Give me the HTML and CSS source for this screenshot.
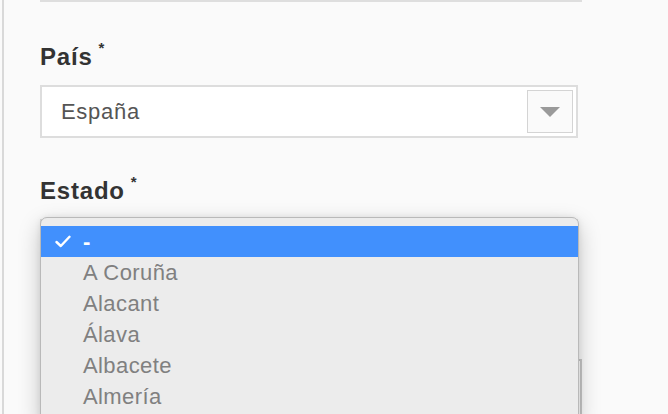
FILE: index.html
```html
<!DOCTYPE html>
<html lang="es">
<head>
<meta charset="utf-8">
<title>Formulario</title>
<link rel="stylesheet" href="styles.css">
</head>
<body>
<div class="page">
  <div class="top-input"></div>

  <div class="field">
    <label class="label">País<span class="req">*</span></label>
    <div class="select">
      <span class="select-value">España</span>
      <span class="select-btn"><span class="tri"></span></span>
    </div>
  </div>

  <div class="field field-estado">
    <label class="label">Estado<span class="req">*</span></label>
    <div class="select-wrap">
      <div class="select select-under"></div>
      <div class="next-box"></div>
      <ul class="menu">
        <li class="opt selected">
          <svg class="check" width="16" height="13" viewBox="0 0 16 13"><path d="M1.5 7 L5.8 11 L14.5 1.8" fill="none" stroke="#fff" stroke-width="2.4" stroke-linecap="round" stroke-linejoin="round"/></svg>
          <span class="opt-text">-</span>
        </li>
        <li class="opt"><span class="opt-text">A Coruña</span></li>
        <li class="opt"><span class="opt-text">Alacant</span></li>
        <li class="opt"><span class="opt-text">Álava</span></li>
        <li class="opt"><span class="opt-text">Albacete</span></li>
        <li class="opt"><span class="opt-text">Almería</span></li>
      </ul>
    </div>
  </div>
</div>
</body>
</html>
```

FILE: styles.css
```css
html, body {
  margin: 0;
  padding: 0;
  background: #fafafa;
  overflow: hidden;
  height: 414px;
}

.page {
  margin-left: 2px;
  border-left: 2px solid #d9d9d9;
  padding-left: 36px;
  height: 470px;
  font-family: "Liberation Sans", Arial, sans-serif;
}

.top-input {
  box-sizing: border-box;
  width: 542px;
  height: 40px;
  margin-top: -38px;
  border: 2px solid #dedede;
  background: #fff;
}

.field {
  display: flex;
  flex-direction: column;
}

.label {
  display: block;
  font-weight: bold;
  font-size: 24px;
  line-height: 28px;
  color: #333;
  margin-top: 41px;
  letter-spacing: 0.8px;
}

.req {
  font-size: 15px;
  line-height: 0;
  vertical-align: 12px;
  margin-left: 6px;
}

.select {
  box-sizing: border-box;
  width: 538px;
  height: 53px;
  margin-top: 14px;
  border: 2px solid #dddddd;
  background: #fff;
  display: flex;
  align-items: center;
  justify-content: space-between;
}

.select-value {
  padding-left: 19px;
  font-size: 22px;
  letter-spacing: 0.7px;
  color: #555;
}

.select-btn {
  box-sizing: border-box;
  width: 46px;
  height: 43px;
  margin-right: 3px;
  border: 1px solid #d4d4d4;
  background: #fafafa;
  display: flex;
  align-items: center;
  justify-content: center;
}

.tri {
  width: 0;
  height: 0;
  border-left: 10px solid transparent;
  border-right: 10px solid transparent;
  border-top: 10px solid #9a9a9a;
}

.field-estado .label {
  margin-top: 39px;
}

.select-wrap {
  position: relative;
  margin-top: 12px;
}

.select-under {
  margin-top: 2px;
}

.next-box {
  box-sizing: border-box;
  width: 542px;
  height: 80px;
  margin-top: 87px;
  border: 2px solid #c8c8c8;
  background: #fff;
}

.menu {
  position: absolute;
  left: 0;
  top: 0;
  width: 539px;
  box-sizing: border-box;
  margin: 0;
  padding: 8px 0 10px;
  list-style: none;
  background: #ececec;
  border: 1px solid #b9b9b9;
  border-radius: 7px;
  box-shadow: 0 8px 22px rgba(0, 0, 0, 0.22), 0 0 6px rgba(0, 0, 0, 0.08);
}

.opt {
  position: relative;
  height: 31px;
  display: flex;
  align-items: center;
  padding-left: 42px;
  font-size: 22px;
  letter-spacing: 0.4px;
  color: #808080;
}

.opt.selected {
  background: #4190fd;
  color: #fff;
  font-weight: bold;
}

.check {
  position: absolute;
  left: 14px;
  top: 9px;
}

.opt-text {
  line-height: 31px;
}
```
